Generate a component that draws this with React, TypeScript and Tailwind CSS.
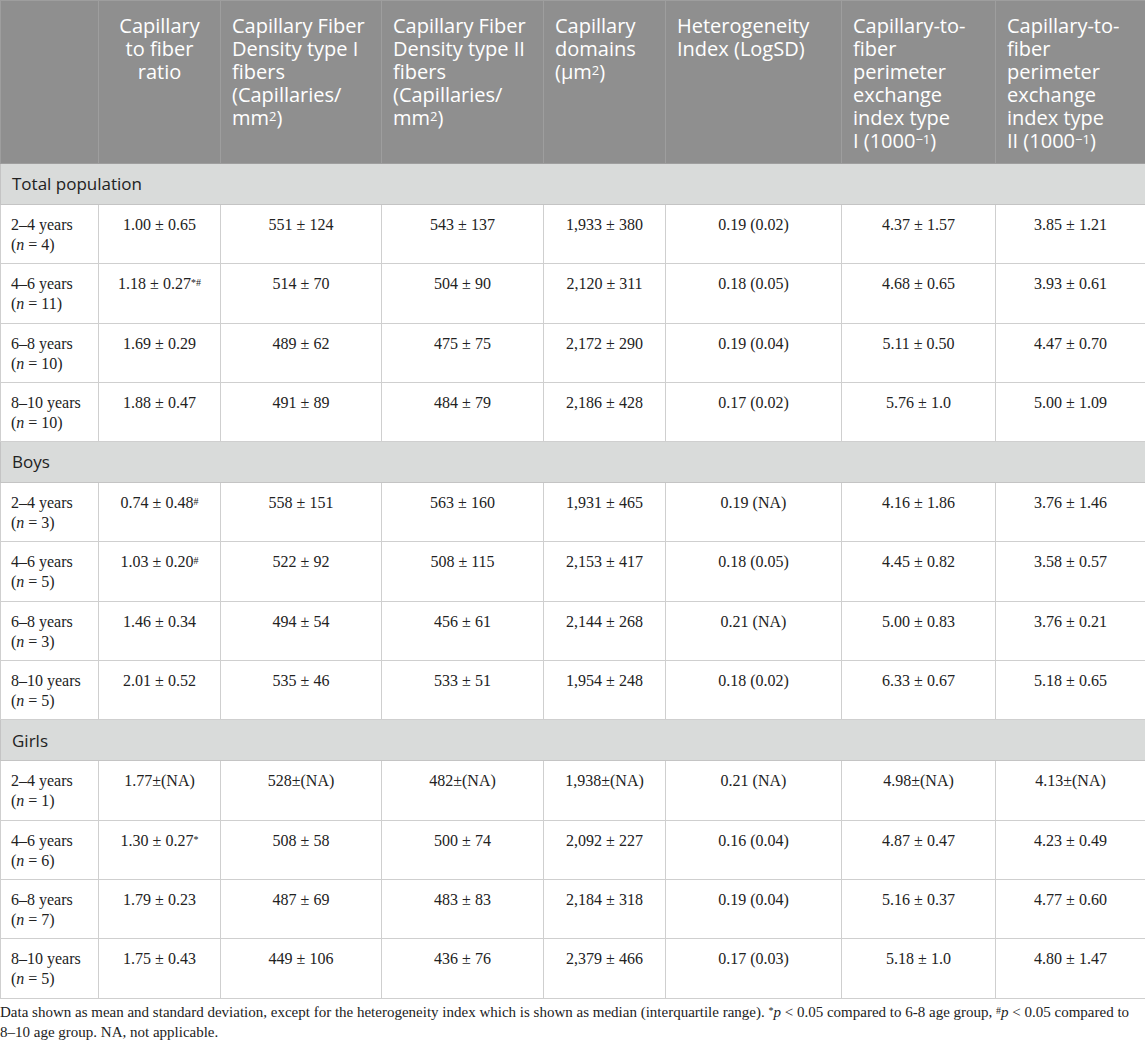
import type { ReactNode } from 'react'

type Row = { age: string; n: number; cells: ReactNode[] }
type Section = { title: string; rows: Row[] }

const colWidths = ['w-[98px]', 'w-[122px]', 'w-[161px]', 'w-[162px]', 'w-[122px]', 'w-[176px]', 'w-[154px]', 'w-[150px]']

const Sup = ({ children }: { children: ReactNode }) => (
  <sup className="text-[10px] relative -top-[3px]">{children}</sup>
)

const HSup = ({ children }: { children: ReactNode }) => (
  <sup className="text-[13px] relative -top-[4px]">{children}</sup>
)

const sections: Section[] = [
  {
    title: 'Total population',
    rows: [
      { age: '2–4 years', n: 4, cells: ['1.00 ± 0.65', '551 ± 124', '543 ± 137', '1,933 ± 380', '0.19 (0.02)', '4.37 ± 1.57', '3.85 ± 1.21'] },
      { age: '4–6 years', n: 11, cells: [<>1.18 ± 0.27<Sup>*#</Sup></>, '514 ± 70', '504 ± 90', '2,120 ± 311', '0.18 (0.05)', '4.68 ± 0.65', '3.93 ± 0.61'] },
      { age: '6–8 years', n: 10, cells: ['1.69 ± 0.29', '489 ± 62', '475 ± 75', '2,172 ± 290', '0.19 (0.04)', '5.11 ± 0.50', '4.47 ± 0.70'] },
      { age: '8–10 years', n: 10, cells: ['1.88 ± 0.47', '491 ± 89', '484 ± 79', '2,186 ± 428', '0.17 (0.02)', '5.76 ± 1.0', '5.00 ± 1.09'] },
    ],
  },
  {
    title: 'Boys',
    rows: [
      { age: '2–4 years', n: 3, cells: [<>0.74 ± 0.48<Sup>#</Sup></>, '558 ± 151', '563 ± 160', '1,931 ± 465', '0.19 (NA)', '4.16 ± 1.86', '3.76 ± 1.46'] },
      { age: '4–6 years', n: 5, cells: [<>1.03 ± 0.20<Sup>#</Sup></>, '522 ± 92', '508 ± 115', '2,153 ± 417', '0.18 (0.05)', '4.45 ± 0.82', '3.58 ± 0.57'] },
      { age: '6–8 years', n: 3, cells: ['1.46 ± 0.34', '494 ± 54', '456 ± 61', '2,144 ± 268', '0.21 (NA)', '5.00 ± 0.83', '3.76 ± 0.21'] },
      { age: '8–10 years', n: 5, cells: ['2.01 ± 0.52', '535 ± 46', '533 ± 51', '1,954 ± 248', '0.18 (0.02)', '6.33 ± 0.67', '5.18 ± 0.65'] },
    ],
  },
  {
    title: 'Girls',
    rows: [
      { age: '2–4 years', n: 1, cells: ['1.77±(NA)', '528±(NA)', '482±(NA)', '1,938±(NA)', '0.21 (NA)', '4.98±(NA)', '4.13±(NA)'] },
      { age: '4–6 years', n: 6, cells: [<>1.30 ± 0.27<Sup>*</Sup></>, '508 ± 58', '500 ± 74', '2,092 ± 227', '0.16 (0.04)', '4.87 ± 0.47', '4.23 ± 0.49'] },
      { age: '6–8 years', n: 7, cells: ['1.79 ± 0.23', '487 ± 69', '483 ± 83', '2,184 ± 318', '0.19 (0.04)', '5.16 ± 0.37', '4.77 ± 0.60'] },
      { age: '8–10 years', n: 5, cells: ['1.75 ± 0.43', '449 ± 106', '436 ± 76', '2,379 ± 466', '0.17 (0.03)', '5.18 ± 1.0', '4.80 ± 1.47'] },
    ],
  },
]

// header lines broken the way the source table wraps them
const headers: ReactNode[][] = [
  [],
  ['Capillary', 'to fiber', 'ratio'],
  ['Capillary Fiber', 'Density type I', 'fibers', '(Capillaries/', <>mm<HSup>2</HSup>)</>],
  ['Capillary Fiber', 'Density type II', 'fibers', '(Capillaries/', <>mm<HSup>2</HSup>)</>],
  ['Capillary', 'domains', <>(µm<HSup>2</HSup>)</>],
  ['Heterogeneity', 'Index (LogSD)'],
  ['Capillary-to-', 'fiber', 'perimeter', 'exchange', 'index type', <>I (1000<HSup>−1</HSup>)</>],
  ['Capillary-to-', 'fiber', 'perimeter', 'exchange', 'index type', <>II (1000<HSup>−1</HSup>)</>],
]

export default function App() {
  return (
    <div className="w-[1145px] bg-white text-[#222]">
      <table className="w-[1145px] table-fixed border-collapse">
        <colgroup>
          {colWidths.map((w, i) => (
            <col key={i} className={w} />
          ))}
        </colgroup>
        <thead>
          <tr className="h-[163px] bg-[#8f8f8f]">
            {headers.map((h, i) => (
              <th
                key={i}
                className={`border border-[#9e9e9e] px-[11px] pt-[13px] align-top font-normal text-white text-[20px] leading-[23px] font-['Open_Sans',sans-serif] ${
                  i === 1 ? 'text-center' : 'text-left'
                }`}
              >
                {h.map((line, li) => (
                  <div key={li} className="whitespace-nowrap">
                    {line}
                  </div>
                ))}
              </th>
            ))}
          </tr>
        </thead>
        <tbody>
          {sections.map((s) => (
            <>
              <tr key={s.title} className="h-[41px] bg-[#d9dbda]">
                <td
                  colSpan={8}
                  className="border border-[#c4c4c4] px-[11px] align-middle text-[17px] text-[#222] font-['Open_Sans',sans-serif]"
                >
                  {s.title}
                </td>
              </tr>
              {s.rows.map((r, ri) => (
                <tr key={s.title + ri} className="h-[59.3px]">
                  <td className="border border-[#cfcfcf] pl-[10px] pr-1 pt-[10px] align-top text-left font-['Liberation_Serif',serif] text-[16px] leading-[20px]">
                    {r.age}
                    <br />(<i>n</i> = {r.n})
                  </td>
                  {r.cells.map((c, ci) => (
                    <td
                      key={ci}
                      className="border border-[#cfcfcf] px-1 pt-[10px] align-top text-center font-['Liberation_Serif',serif] text-[16px] leading-[20px] whitespace-pre"
                    >
                      {c}
                    </td>
                  ))}
                </tr>
              ))}
            </>
          ))}
        </tbody>
      </table>
      <p className="pt-[3px] font-['Liberation_Serif',serif] text-[15px] leading-[20px] text-[#222]">
        Data shown as mean and standard deviation, except for the heterogeneity index which is shown as median (interquartile range).{' '}
        <Sup>*</Sup>
        <i>p</i> &lt; 0.05 compared to 6-8 age group, <Sup>#</Sup>
        <i>p</i> &lt; 0.05 compared to 8–10 age group. NA, not applicable.
      </p>
    </div>
  )
}
